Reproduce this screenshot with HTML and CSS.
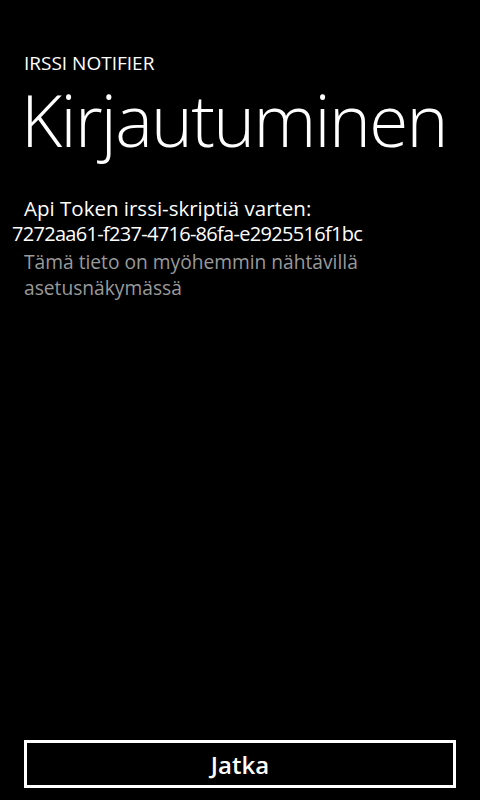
FILE: index.html
```html
<!DOCTYPE html>
<html lang="fi">
<head>
<meta charset="utf-8">
<title>Kirjautuminen</title>
<link rel="stylesheet" href="styles.css">
</head>
<body>
<div class="page">
  <header class="title-panel">
    <div class="app-name">IRSSI NOTIFIER</div>
    <h1 class="page-title">Kirjautuminen</h1>
  </header>
  <main class="content">
    <div class="label">Api Token irssi-skriptiä varten:</div>
    <div class="token">7272aa61-f237-4716-86fa-e2925516f1bc</div>
    <div class="hint">Tämä tieto on myöhemmin nähtävillä asetusnäkymässä</div>
  </main>
  <footer class="actions">
    <button class="btn" type="button">Jatka</button>
  </footer>
</div>
</body>
</html>
```

FILE: styles.css
```css
html, body {
  margin: 0;
  padding: 0;
  background: #000;
  color: #fff;
  font-family: "Open Sans", "Noto Sans", sans-serif;
}
.page {
  width: 480px;
  height: 800px;
  display: flex;
  flex-direction: column;
  box-sizing: border-box;
}
.title-panel {
  padding: 50px 24px 0 24px;
}
.app-name {
  font-size: 19px;
  line-height: 26px;
  font-weight: 400;
}
.page-title {
  margin: 4px 0 0 -3px;
  font-size: 71px;
  font-weight: 300;
  line-height: 80px;
  letter-spacing: -1.7px;
}
.content {
  flex: 1;
  padding: 35px 12px 0 12px;
}
.label {
  padding-left: 12px;
  font-size: 20.5px;
  line-height: 26px;
}
.token {
  font-size: 20px;
  line-height: 26px;
  letter-spacing: -0.7px;
}
.hint {
  margin-top: 2px;
  padding-left: 12px;
  width: 380px;
  font-size: 19.2px;
  line-height: 26px;
  color: #9a9a9a;
}
.actions {
  padding: 0 24px 12px 24px;
}
.btn {
  display: block;
  width: 100%;
  height: 48px;
  box-sizing: border-box;
  background: #000;
  color: #fff;
  border: 3px solid #fff;
  border-radius: 0;
  font-family: "Open Sans", "Noto Sans", sans-serif;
  font-size: 24px;
  font-weight: 600;
  padding: 0;
}
```
